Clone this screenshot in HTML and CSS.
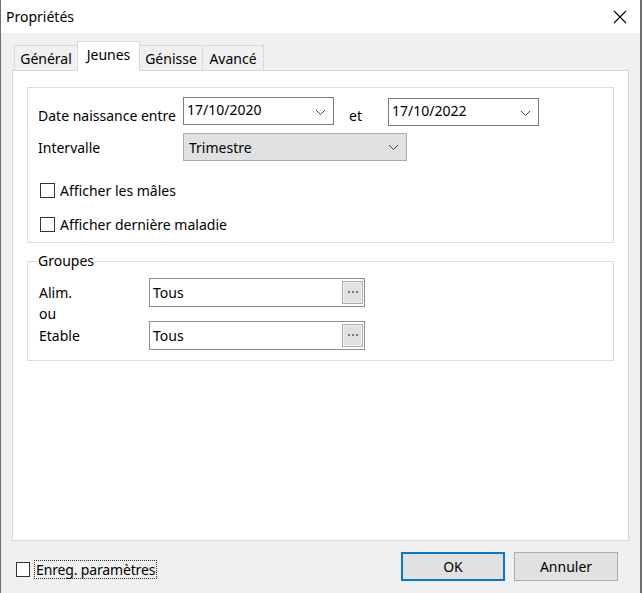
FILE: index.html
```html
<!DOCTYPE html>
<html lang="fr">
<head>
<meta charset="utf-8">
<title>Propriétés</title>
<link rel="stylesheet" href="styles.css">
</head>
<body>
<div class="window">
  <div class="titlebar">
    <span class="title">Propriétés</span>
    <svg class="close" width="14" height="14" viewBox="0 0 14 14"><path d="M1 1 L13 13 M13 1 L1 13" stroke="#000" stroke-width="1.1" fill="none"/></svg>
  </div>
  <div class="body">
    <div class="tabs">
      <div class="tab t1">Général</div>
      <div class="tab t2 active">Jeunes</div>
      <div class="tab t3">Génisse</div>
      <div class="tab t4">Avancé</div>
    </div>
    <div class="panel">
      <div class="group g1">
        <div class="row row-date">
          <span class="lbl lbl-date">Date naissance entre</span>
          <div class="combo date d1"><span class="val">17/10/2020</span><svg class="chev" width="11" height="7" viewBox="0 0 11 7"><path d="M1 1 L5.5 5.5 L10 1" stroke="#444" stroke-width="1" fill="none"/></svg></div>
          <span class="lbl et">et</span>
          <div class="combo date d2"><span class="val">17/10/2022</span><svg class="chev" width="11" height="7" viewBox="0 0 11 7"><path d="M1 1 L5.5 5.5 L10 1" stroke="#444" stroke-width="1" fill="none"/></svg></div>
        </div>
        <div class="row row-int">
          <span class="lbl lbl-int">Intervalle</span>
          <div class="combo select"><span class="val">Trimestre</span><svg class="chev" width="11" height="7" viewBox="0 0 11 7"><path d="M1 1 L5.5 5.5 L10 1" stroke="#444" stroke-width="1" fill="none"/></svg></div>
        </div>
        <div class="check c1"><span class="box"></span><span class="clbl">Afficher les mâles</span></div>
        <div class="check c2"><span class="box"></span><span class="clbl">Afficher dernière maladie</span></div>
      </div>
      <fieldset class="group g2">
        <legend>Groupes</legend>
        <div class="grow gr1">
          <span class="glbl">Alim.</span>
          <div class="field"><span class="val">Tous</span><span class="dots"><svg width="11" height="3" viewBox="0 0 11 3"><rect x="0" y="0" width="2" height="2" fill="#7a7a7a"/><rect x="4" y="0" width="2" height="2" fill="#7a7a7a"/><rect x="8" y="0" width="2" height="2" fill="#7a7a7a"/></svg></span></div>
        </div>
        <div class="ou">ou</div>
        <div class="grow gr2">
          <span class="glbl">Etable</span>
          <div class="field"><span class="val">Tous</span><span class="dots"><svg width="11" height="3" viewBox="0 0 11 3"><rect x="0" y="0" width="2" height="2" fill="#7a7a7a"/><rect x="4" y="0" width="2" height="2" fill="#7a7a7a"/><rect x="8" y="0" width="2" height="2" fill="#7a7a7a"/></svg></span></div>
        </div>
      </fieldset>
    </div>
    <div class="footer">
      <div class="check save"><span class="box"></span><span class="clbl focus">Enreg. paramètres</span></div>
      <div class="buttons">
        <div class="btn ok">OK</div>
        <div class="btn cancel">Annuler</div>
      </div>
    </div>
  </div>
</div>
</body>
</html>
```
FILE: styles.css
```css
* { box-sizing: border-box; }
html, body { margin: 0; padding: 0; background: #f0f0f0; }
body {
  font-family: "Noto Sans", "Open Sans", "DejaVu Sans", sans-serif;
  font-size: 14px;
  color: #000;
}
.window {
  width: 642px;
  height: 593px;
  background: #f0f0f0;
  border-left: 1px solid #6e6e6e;
  border-right: 2px solid #6e6e6e;
  overflow: hidden;
}
.titlebar {
  height: 33px;
  background: #fff;
  display: flex;
  align-items: center;
  justify-content: space-between;
  padding: 0 13px 0 5px;
}
.title { font-size: 14px; margin-top: 0; }
.close { display: block; }

.body { padding-top: 9px; }

.tabs {
  display: flex;
  align-items: flex-end;
  height: 28px;
  margin-left: 13px;
}
.tab {
  height: 25px;
  border: 1px solid #d9d9d9;
  border-bottom: none;
  background: #f0f0f0;
  margin-left: -1px;
  display: flex;
  align-items: center;
  justify-content: center;
  font-size: 14px;
  padding-top: 1px;
}
.tab.t1 { width: 64px; margin-left: 0; }
.tab.t2 { width: 63px; }
.tab.t3 { width: 64px; }
.tab.t4 { width: 62px; }
.tab.active {
  position: relative;
  z-index: 1;
  height: 30px;
  margin-bottom: -1px;
  background: #fff;
  padding-top: 0;
  padding-bottom: 4px;
}

.panel {
  margin-left: 11px;
  width: 617px;
  height: 471px;
  background: #fff;
  border: 1px solid #d9d9d9;
  padding: 16px 0 0 14px;
}

.group {
  width: 587px;
  border: 1px solid #dcdcdc;
  margin: 0;
}
.g1 {
  height: 156px;
  padding: 9px 0 0 10px;
}
.row { display: flex; align-items: flex-start; }
.lbl-date { width: 145px; margin-top: 9px; }
.combo {
  position: relative;
  height: 28px;
  display: flex;
  align-items: center;
  padding-left: 3px;
}
.combo .val { margin-top: -3px; }
.combo .chev { position: absolute; right: 7px; top: 11px; }
.date { background: #fff; border: 1px solid #7a7a7a; }
.d1 { width: 151px; }
.d2 { width: 151px; margin-top: 1px; }
.et { width: 39px; margin-left: 15px; margin-top: 9px; }
.row-int { margin-top: 7px; align-items: center; }
.lbl-int { width: 145px; }
.select { width: 224px; background: #e1e1e1; border: 1px solid #adadad; padding-left: 5px; }
.select .val { margin-top: 1px; }
.select .chev { top: 10px; }

.check { display: flex; align-items: center; }
.box {
  width: 15px;
  height: 15px;
  border: 1px solid #333;
  background: #fff;
  flex: none;
}
.clbl { margin-left: 5px; }
.c1 { margin-top: 20px; margin-left: 2px; }
.c2 { margin-top: 15px; margin-left: 2px; }

.g2 {
  margin-top: 10px;
  height: 108px;
  padding: 9px 0 0 11px;
  position: relative;
}
.g2 legend {
  padding: 0 1px;
  margin-left: -2px;
  font-size: 14px;
  line-height: 16px;
}
.grow { display: flex; align-items: center; }
.glbl { width: 110px; }
.field {
  position: relative;
  width: 216px;
  height: 29px;
  border: 1px solid #8c8c8c;
  background: #fff;
  display: flex;
  align-items: center;
  padding-left: 3px;
}
.field .val { margin-top: -1px; }
.dots {
  position: absolute;
  right: 1px;
  top: 2px;
  width: 21px;
  height: 23px;
  background: #e1e1e1;
  border: 1px solid #adadad;
  box-shadow: inset 0 0 0 1px #f0f0f0;
  display: flex;
  align-items: center;
  justify-content: center;
  padding-left: 1px;
}
.dots svg { display: block; }
.ou { height: 14px; line-height: 14px; }

.footer {
  display: flex;
  align-items: center;
  justify-content: space-between;
  height: 53px;
  padding: 0 22px 0 15px;
}
.save { margin-top: 4px; }
.save .box { width: 14px; height: 15px; }
.focus {
  margin-left: 4px;
  border: 1px dotted #333;
  padding: 0 1px;
  line-height: 17px;
  letter-spacing: -0.15px;
}
.buttons { display: flex; gap: 9px; margin-top: -2px; }
.btn {
  width: 104px;
  height: 29px;
  background: #e1e1e1;
  border: 1px solid #adadad;
  display: flex;
  align-items: center;
  justify-content: center;
}
.btn.ok { border: 2px solid #0078d7; }
```
